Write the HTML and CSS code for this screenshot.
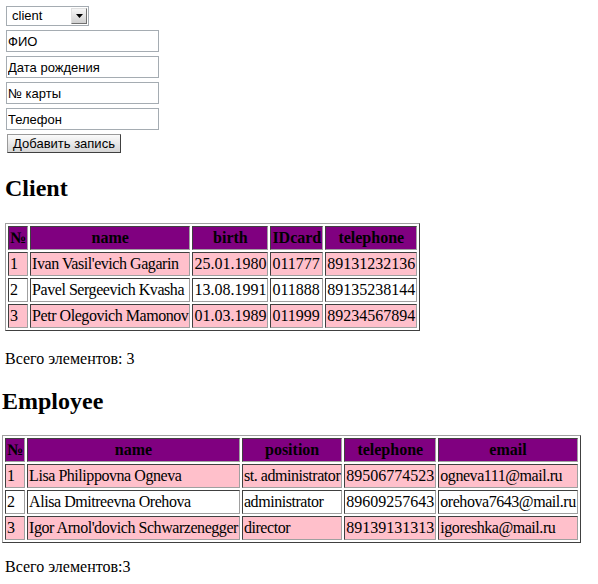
FILE: index.html
```html
<!DOCTYPE html>
<html>
<head>
<meta charset="utf-8">
<link rel="stylesheet" href="styles.css">
</head>
<body>
<form class="form">
  <div class="select"><span class="select-text">client</span><span class="select-btn"><svg width="9" height="5" viewBox="0 0 9 5"><path d="M1 0h7L4.5 4z" fill="#000"/></svg></span></div>
  <input class="field" type="text" placeholder="ФИО">
  <input class="field" type="text" placeholder="Дата рождения">
  <input class="field" type="text" placeholder="№ карты">
  <input class="field" type="text" placeholder="Телефон">
  <button class="btn" type="button">Добавить запись</button>
</form>

<section class="client">
  <h2 class="title">Client</h2>
  <table class="grid">
    <tr><th>№</th><th>name</th><th>birth</th><th>IDcard</th><th>telephone</th></tr>
    <tr class="odd"><td>1</td><td class="txt">Ivan Vasil'evich Gagarin</td><td>25.01.1980</td><td>011777</td><td>89131232136</td></tr>
    <tr><td>2</td><td class="txt">Pavel Sergeevich Kvasha</td><td>13.08.1991</td><td>011888</td><td>89135238144</td></tr>
    <tr class="odd"><td>3</td><td class="txt">Petr Olegovich Mamonov</td><td>01.03.1989</td><td>011999</td><td>89234567894</td></tr>
  </table>
  <p class="total">Всего элементов: 3</p>
</section>

<section class="employee">
  <h2 class="title">Employee</h2>
  <table class="grid">
    <tr><th>№</th><th>name</th><th>position</th><th>telephone</th><th>email</th></tr>
    <tr class="odd"><td>1</td><td class="txt">Lisa Philippovna Ogneva</td><td class="txt">st. administrator</td><td>89506774523</td><td class="txt">ogneva111@mail.ru</td></tr>
    <tr><td>2</td><td class="txt">Alisa Dmitreevna Orehova</td><td class="txt">administrator</td><td>89609257643</td><td class="txt">orehova7643@mail.ru</td></tr>
    <tr class="odd"><td>3</td><td class="txt">Igor Arnol'dovich Schwarzenegger</td><td class="txt">director</td><td>89139131313</td><td class="txt">igoreshka@mail.ru</td></tr>
  </table>
  <p class="total total-emp">Всего элементов:3</p>
</section>
</body>
</html>
```
FILE: styles.css
```css
body {
  margin: 0;
  font-family: "Liberation Serif", "Times New Roman", serif;
  font-size: 16px;
  color: #000;
  background: #fff;
}
.form {
  padding: 6px 0 0 6px;
  margin: 0;
}
.select {
  box-sizing: border-box;
  width: 83px;
  height: 20px;
  border: 1px solid #a5acb2;
  display: flex;
  align-items: stretch;
  font-family: "Liberation Sans", Arial, sans-serif;
  font-size: 13px;
}
.select-text {
  flex: 1;
  padding-left: 5px;
  line-height: 18px;
}
.select-btn {
  width: 16px;
  margin: 1px;
  box-sizing: border-box;
  border: 1px solid #808080;
  border-color: #e0e0e0 #707070 #707070 #e0e0e0;
  background: linear-gradient(#f6f6f6, #d0d0d0);
  display: flex;
  align-items: center;
  justify-content: center;
}
.field {
  display: block;
  box-sizing: border-box;
  width: 153px;
  height: 22px;
  margin: 4px 0 0 0;
  padding: 0 1px;
  border: 1px solid #a5acb2;
  font-family: "Liberation Sans", Arial, sans-serif;
  font-size: 13px;
  outline: none;
}
.field::placeholder {
  color: #000;
  opacity: 1;
}
.btn {
  display: block;
  box-sizing: border-box;
  margin: 4px 0 0 1px;
  width: 114px;
  height: 19px;
  padding: 0;
  border: 1px solid #404040;
  border-color: #9a9a9a #404040 #404040 #9a9a9a;
  background: linear-gradient(#fbfbfb, #e4e4e4 60%, #d6d6d6);
  font-family: "Liberation Sans", Arial, sans-serif;
  font-size: 13px;
  color: #000;
}
.title {
  font-size: 24px;
  font-weight: bold;
  margin: 21px 0 21px 0;
  line-height: 28px;
}
.client {
  padding-left: 5px;
}
.employee {
  padding-left: 2px;
}
.employee .title {
  margin-top: 19px;
  margin-bottom: 20px;
}
.grid {
  border-collapse: separate;
  border-spacing: 2px;
  border: 1px solid;
  border-color: #a0a0a0 #404040 #404040 #a0a0a0;
}
.grid th,
.grid td {
  padding: 1px;
  border: 1px solid;
  border-color: #404040 #a0a0a0 #a0a0a0 #404040;
  white-space: nowrap;
  line-height: 20px;
}
.grid th {
  background: #800080;
  font-weight: bold;
}
.grid td {
  text-align: left;
}
.grid td.txt {
  letter-spacing: -0.45px;
}
.grid .odd td {
  background: #ffc0cb;
}
.total {
  margin: 19px 0 0 0;
  line-height: 18px;
}
.total-emp {
  margin-top: 15px;
  padding-left: 3px;
}
```
